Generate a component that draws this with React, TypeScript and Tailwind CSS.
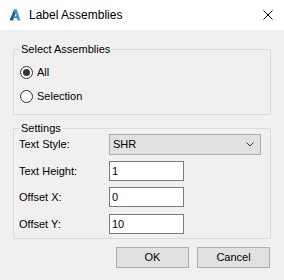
import React from 'react';

const font = "font-['Liberation_Sans',Arial,sans-serif]";

function Radio({ checked, label }: { checked?: boolean; label: string }) {
  return (
    <div className="flex h-[20px] items-center">
      <span className="ml-[6px] flex h-[13px] w-[13px] items-center justify-center rounded-full border border-[#333] bg-white">
        {checked && <span className="h-[7px] w-[7px] rounded-full bg-[#333]" />}
      </span>
      <span className="ml-[4px] text-[11px] text-black">{label}</span>
    </div>
  );
}

function Field({ label, value }: { label: string; value: string }) {
  return (
    <div className="flex items-center">
      <span className="w-[95px] pl-[5px] text-[11px] text-black">{label}</span>
      <div className="flex h-[20px] w-[75px] items-center border border-[#7a7a7a] bg-white pl-[2px] text-[11px] text-black">
        {value}
      </div>
    </div>
  );
}

export default function App() {
  return (
    <div className={`h-[280px] w-[284px] overflow-hidden bg-[#f0f0f0] ${font}`}>
      <div className="flex h-[30px] items-center bg-white">
        <svg className="ml-[9px]" width="12" height="12" viewBox="0 0 12 12">
          <path d="M0.5 11.5 L5 0.5 L8 0.5 L4 11.5 Z" fill="#1f5f8f" />
          <path d="M5 0.5 L8 0.5 L11.5 11.5 L8.5 11.5 Z" fill="#4aa3d8" />
          <path d="M4.2 7.5 L9 7.5 L9.5 9 L3.7 9 Z" fill="#2d7fb5" />
        </svg>
        <span className="ml-[8px] text-[12px] text-black">Label Assemblies</span>
        <svg className="ml-auto mr-[11px]" width="10" height="10" viewBox="0 0 10 10">
          <path d="M0.5 0.5 L9.5 9.5 M9.5 0.5 L0.5 9.5" stroke="#000" strokeWidth="1" />
        </svg>
      </div>

      <div className="px-[13px]">
        <fieldset className="mt-[13px] border border-[#dcdcdc] pb-[8px]">
          <legend className="ml-[6px] px-[1px] text-[11px] leading-[12px] text-black">Select Assemblies</legend>
          <div className="flex flex-col gap-[4px] pt-[7px]">
            <Radio checked label="All" />
            <Radio label="Selection" />
          </div>
        </fieldset>

        <fieldset className="mt-[7px] border border-[#dcdcdc] pb-[4px]">
          <legend className="ml-[6px] px-[1px] text-[11px] leading-[12px] text-black">Settings</legend>
          <div className="flex items-center">
            <span className="w-[95px] pl-[5px] text-[11px] text-black">Text Style:</span>
            <div className="flex h-[21px] w-[152px] items-center border border-[#adadad] bg-[#e1e1e1] pl-[3px] text-[11px] text-black">
              SHR
              <svg className="ml-auto mr-[6px]" width="8" height="5" viewBox="0 0 8 5">
                <path d="M0.5 0.5 L4 4 L7.5 0.5" stroke="#333" strokeWidth="1" fill="none" />
              </svg>
            </div>
          </div>
          <div className="mt-[6px] flex flex-col gap-[6px]">
            <Field label="Text Height:" value="1" />
            <Field label="Offset X:" value="0" />
          </div>
          <div className="mt-[7px]">
            <Field label="Offset Y:" value="10" />
          </div>
        </fieldset>

        <div className="mt-[8px] flex justify-end gap-[8px] pr-[1px]">
          <button className="flex h-[21px] w-[73px] items-center justify-center border border-[#adadad] bg-[#e1e1e1] text-[11px] text-black">
            OK
          </button>
          <button className="flex h-[21px] w-[73px] items-center justify-center border border-[#adadad] bg-[#e1e1e1] text-[11px] text-black">
            Cancel
          </button>
        </div>
      </div>
    </div>
  );
}
